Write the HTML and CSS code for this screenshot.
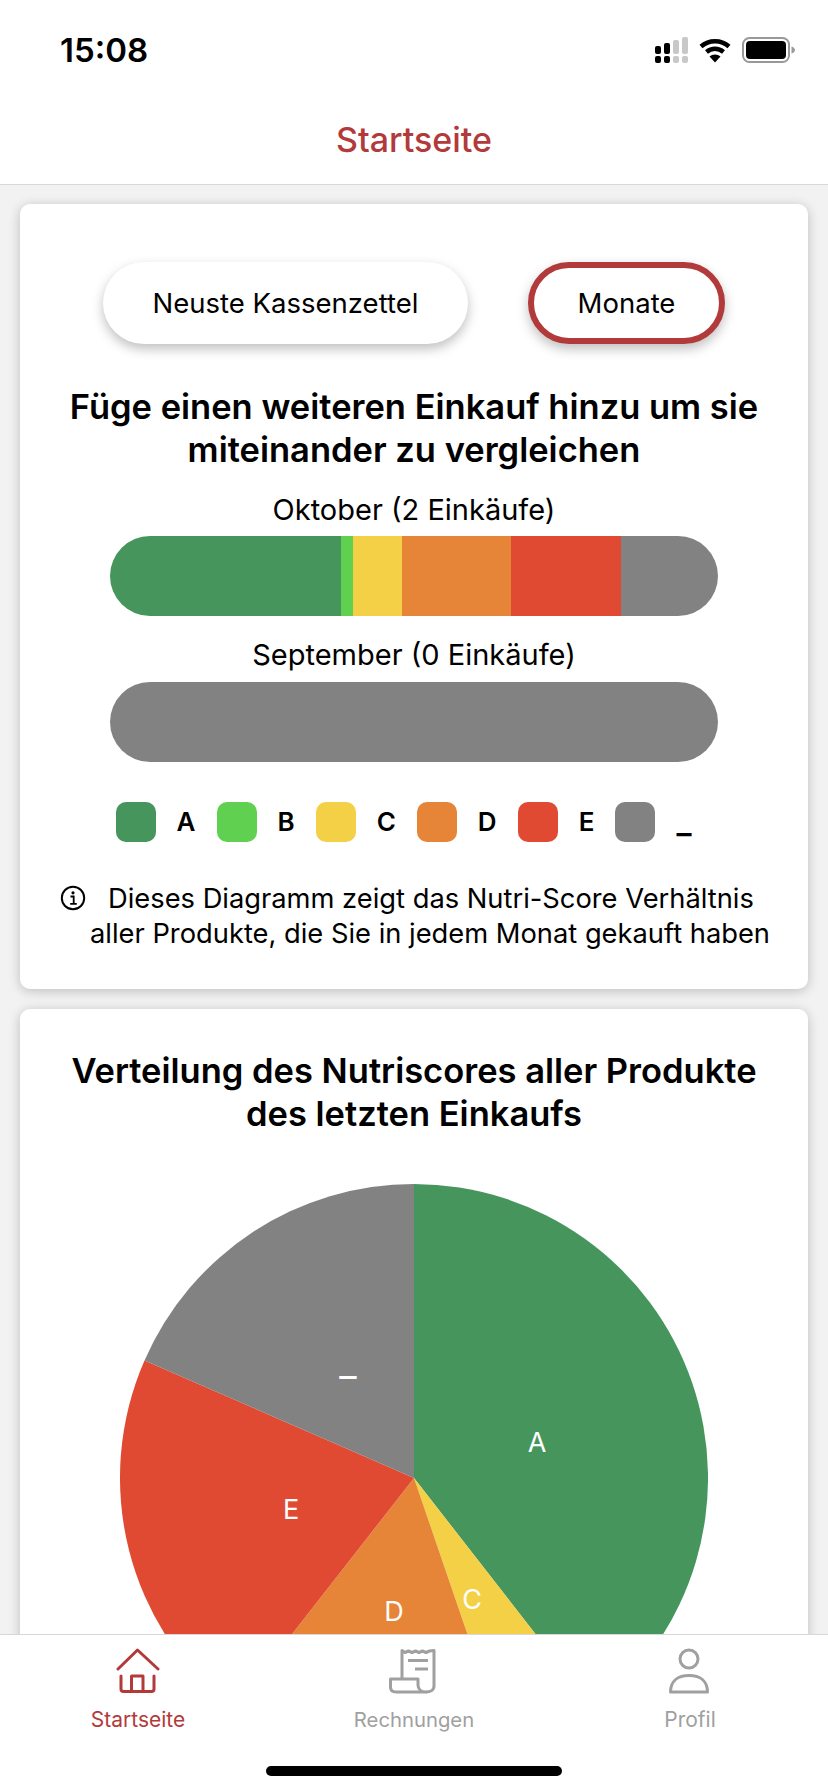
FILE: index.html
```html
<!DOCTYPE html>
<html lang="de">
<head>
    <meta charset="UTF-8">
    <meta name="viewport" content="width=device-width, initial-scale=1.0">
    <title>Startseite</title>
    <link rel="stylesheet" href="styles.css">
</head>
<body>
    <div class="top">
        <!-- Status bar -->
        <div class="status-bar">
            <span class="time">15:08</span>
            <div class="status-icons">
                <svg width="33" height="26" viewBox="0 0 33 26">
                    <rect x="0" y="9" width="6" height="8" rx="2" fill="#000"/>
                    <rect x="9" y="6" width="6" height="11" rx="2" fill="#000"/>
                    <rect x="18" y="3" width="6" height="14" rx="2" fill="#c8c8c8"/>
                    <rect x="27" y="0" width="6" height="17" rx="2" fill="#c8c8c8"/>
                    <rect x="0" y="19" width="6" height="7" rx="2" fill="#000"/>
                    <rect x="9" y="19" width="6" height="7" rx="2" fill="#000"/>
                    <rect x="18" y="19" width="6" height="7" rx="2" fill="#c8c8c8"/>
                    <rect x="27" y="19" width="6" height="7" rx="2" fill="#c8c8c8"/>
                </svg>
                <svg width="32" height="25" viewBox="0 0 32 25">
                    <path d="M2 8.500C10 1.500 22 1.500 30 8.500" fill="none" stroke="#000" stroke-width="4.500"/>
                    <path d="M7.500 14C12.500 9.800 19.500 9.800 24.500 14" fill="none" stroke="#000" stroke-width="4.500"/>
                    <path d="M10.500 18.500L16 24.500L21.500 18.500C18.500 15.800 13.500 15.800 10.500 18.500Z" fill="#000"/>
                </svg>
                <svg class="battery" width="53" height="26" viewBox="0 0 53 26">
                    <rect x="1" y="1" width="46" height="24" rx="6.500" fill="#fff" stroke="#999" stroke-width="2"/>
                    <rect x="4" y="4" width="40" height="18" rx="4" fill="#000"/>
                    <path d="M49.500 9.500C51.500 10 53 11.500 53 13C53 14.500 51.500 16 49.500 16.500Z" fill="#999"/>
                </svg>
            </div>
        </div>
        <header class="page-header">Startseite</header>
    </div>

    <main class="content">
        <section class="card card-months">
            <div class="tabs">
                <button class="pill pill-wide">Neuste Kassenzettel</button>
                <button class="pill pill-active">Monate</button>
            </div>

            <h2 class="card-title">Füge einen weiteren Einkauf hinzu um sie miteinander zu vergleichen</h2>

            <p class="bar-label">Oktober (2 Einkäufe)</p>
            <div class="bar">
                <div class="seg a" style="width: 231px"></div>
                <div class="seg b" style="width: 12px"></div>
                <div class="seg c" style="width: 49px"></div>
                <div class="seg d" style="width: 109px"></div>
                <div class="seg e" style="width: 110px"></div>
                <div class="seg none" style="width: 97px"></div>
            </div>

            <p class="bar-label">September (0 Einkäufe)</p>
            <div class="bar">
                <div class="seg none" style="width: 608px"></div>
            </div>

            <!-- Legend -->
            <div class="legend">
                <span class="swatch a"></span><span class="legend-letter">A</span>
                <span class="swatch b"></span><span class="legend-letter">B</span>
                <span class="swatch c"></span><span class="legend-letter">C</span>
                <span class="swatch d"></span><span class="legend-letter">D</span>
                <span class="swatch e"></span><span class="legend-letter">E</span>
                <span class="swatch none"></span><span class="legend-letter last">_</span>
            </div>

            <p class="info">
                <svg class="info-icon" width="26" height="26" viewBox="0 0 26 26">
                    <circle cx="13" cy="13" r="11.200" fill="none" stroke="#000" stroke-width="2"/>
                    <circle cx="13" cy="7.800" r="1.600" fill="#000"/>
                    <path d="M10.500 11.500H13.700V18.500M10.200 18.800H16.800" fill="none" stroke="#000" stroke-width="1.800"/>
                </svg>Dieses Diagramm zeigt das Nutri-Score Verhältnis aller Produkte, die Sie in jedem Monat gekauft haben
            </p>
        </section>

        <section class="card card-pie">
            <h2 class="card-title">Verteilung des Nutriscores aller Produkte des letzten Einkaufs</h2>
            <svg class="pie" width="588" height="588" viewBox="-294 -294 588 588">
                <path d="M0 0L0 -294A294 294 0 0 1 180.600 232Z" fill="#45955c"/>
                <path d="M0 0L180.600 232A294 294 0 0 1 95.200 278.200Z" fill="#f4d047"/>
                <path d="M0 0L95.200 278.200A294 294 0 0 1 -181 231.700Z" fill="#e68537"/>
                <path d="M0 0L-181 231.700A294 294 0 0 1 -269.500 -117.500Z" fill="#e04a33"/>
                <path d="M0 0L-269.500 -117.500A294 294 0 0 1 0 -294Z" fill="#828282"/>
                <text x="123" y="-26" class="pie-label">A</text>
                <text x="-66" y="-102" class="pie-label pie-dash">_</text>
                <text x="-123" y="41" class="pie-label">E</text>
                <text x="-20" y="143" class="pie-label">D</text>
                <text x="58" y="131" class="pie-label">C</text>
            </svg>
        </section>
    </main>

    <nav class="tab-bar">
        <div class="tab tab-active">
            <svg width="44" height="46" viewBox="0 0 44 46" fill="none" stroke="#b33a3a" stroke-width="3" stroke-linecap="round" stroke-linejoin="round">
                <path d="M2 21L21.500 2L42 21"/>
                <path d="M5 28V41C5 42.500 6 43.500 7.500 43.500H35.500C37 43.500 38 42.500 38 41V28"/>
                <path d="M15.500 43V28H27V43"/>
            </svg>
            <span>Startseite</span>
        </div>
        <div class="tab">
            <svg class="receipt" width="48" height="46" viewBox="0 0 48 46" fill="none" stroke="#a0a0a0" stroke-width="3" stroke-linejoin="round">
                <path d="M2.500 31H30V37C30 41 33 44 38 44H8C4.500 44 2.500 42 2.500 39Z"/>
                <path d="M14 31V2.500L17 4.500L20.500 3L24 4.500L27.500 3L31 4.500L34.500 3L38 4.500L41.500 3L46 2.500V38C46 42 42.500 44 38 44"/>
                <path d="M20 12.500H40M27 21H40"/>
            </svg>
            <span class="tab-label-tight">Rechnungen</span>
        </div>
        <div class="tab">
            <svg width="44" height="46" viewBox="0 0 44 46" fill="none" stroke="#a0a0a0" stroke-width="3" stroke-linejoin="round">
                <circle cx="21" cy="11" r="9"/>
                <path d="M2.500 44C2.500 33 10 27.500 21 27.500C32 27.500 39.500 33 39.500 44Z"/>
            </svg>
            <span>Profil</span>
        </div>
    </nav>
    <div class="home-area">
        <div class="home-indicator"></div>
    </div>
</body>
</html>
```

FILE: styles.css
```css
html, body {
    margin: 0;
    padding: 0;
}

body {
    width: 828px;
    height: 1792px;
    display: flex;
    flex-direction: column;
    overflow: hidden;
    font-family: Inter, "Liberation Sans", sans-serif;
    color: #000;
    background-color: #f2f2f2;
}

/* Top area */
.top {
    background: #fff;
    border-bottom: 1px solid #d8d8d8;
    position: relative;
    z-index: 2;
}

.status-bar {
    height: 100px;
    padding: 30px 33px 0 60px;
    box-sizing: border-box;
    display: flex;
    justify-content: space-between;
    align-items: flex-start;
}

.time {
    font-size: 33px;
    line-height: 40px;
    font-weight: 600;
}

.status-icons {
    display: flex;
    align-items: center;
    gap: 11px;
    padding-top: 7px;
}

.page-header {
    height: 84px;
    text-align: center;
    font-size: 34px;
    line-height: 80px;
    font-weight: 500;
    color: #b33a3a;
}

/* Cards */
.content {
    flex: 1;
    min-height: 0;
    overflow: hidden;
    padding: 19px 20px 0;
    display: flex;
    flex-direction: column;
    gap: 20px;
}

.card {
    flex-shrink: 0;
    background: #fff;
    border-radius: 10px;
    box-shadow: 0 2px 12px rgba(0, 0, 0, 0.22);
    display: flex;
    flex-direction: column;
    align-items: center;
}

.card-months {
    height: 785px;
    padding-top: 58px;
    box-sizing: border-box;
}

.tabs {
    display: flex;
    gap: 60px;
    margin-bottom: 41px;
}

.pill {
    height: 82px;
    box-sizing: border-box;
    border: none;
    border-radius: 41px;
    background: #fff;
    font-family: inherit;
    font-size: 27.500px;
    color: #000;
    box-shadow: 0 5px 12px rgba(0, 0, 0, 0.25);
}

.pill-wide {
    width: 365px;
}

.pill-active {
    width: 197px;
    border: 6px solid #b33a3a;
}

.card-title {
    margin: 0;
    width: 710px;
    text-align: center;
    font-size: 34.500px;
    line-height: 43px;
    font-weight: 600;
}

.bar-label {
    margin: 0;
    font-size: 29px;
    line-height: 40px;
    text-align: center;
}

.card-title + .bar-label {
    margin-top: 19px;
}

.bar {
    width: 608px;
    height: 80px;
    margin: 6px 0 19px;
    border-radius: 40px;
    overflow: hidden;
    display: flex;
}

.bar + .bar-label + .bar {
    margin-top: 7px;
}

.seg {
    height: 100%;
}

.a { background: #45955c; }
.b { background: #5fd04f; }
.c { background: #f4d047; }
.d { background: #e68537; }
.e { background: #e04a33; }
.none { background: #828282; }

/* Legend */
.legend {
    display: flex;
    align-items: center;
    margin-top: 21px;
}

.swatch {
    width: 40px;
    height: 40px;
    border-radius: 10px;
}

.legend-letter {
    margin: 0 21px;
    font-size: 26px;
    line-height: 40px;
    font-weight: 600;
}

.legend-letter.last {
    font-size: 32px;
}

.info {
    margin: 39px 0 0;
    width: 788px;
    box-sizing: border-box;
    padding-left: 70px;
    text-indent: -30px;
    font-size: 27.300px;
    line-height: 35px;
}

.info-icon {
    margin-right: 22px;
    vertical-align: -3px;
}

.card-pie {
    height: 800px;
    padding-top: 40px;
    box-sizing: border-box;
}

.pie {
    margin-top: 49px;
}

.pie-label {
    fill: #fff;
    font-size: 27px;
    text-anchor: middle;
}

.pie-dash {
    font-size: 38px;
}

/* Bottom navigation */
.tab-bar {
    position: relative;
    z-index: 2;
    height: 100px;
    box-sizing: border-box;
    flex-shrink: 0;
    background: #fff;
    border-top: 1px solid #d8d8d8;
    display: grid;
    grid-template-columns: repeat(3, 1fr);
    padding-top: 13px;
}

.tab {
    display: flex;
    flex-direction: column;
    align-items: center;
    gap: 13px;
    font-size: 21px;
    line-height: 26px;
    color: #a0a0a0;
}

.tab-active {
    color: #b33a3a;
}

.receipt {
    margin-left: -4px;
}

.tab-label-tight {
    font-size: 20.300px;
}

.home-area {
    position: relative;
    z-index: 2;
    height: 58px;
    flex-shrink: 0;
    background: #fff;
    box-sizing: border-box;
    padding-top: 32px;
}

.home-indicator {
    width: 296px;
    height: 10px;
    margin: 0 auto;
    border-radius: 5px;
    background: #000;
}
```
